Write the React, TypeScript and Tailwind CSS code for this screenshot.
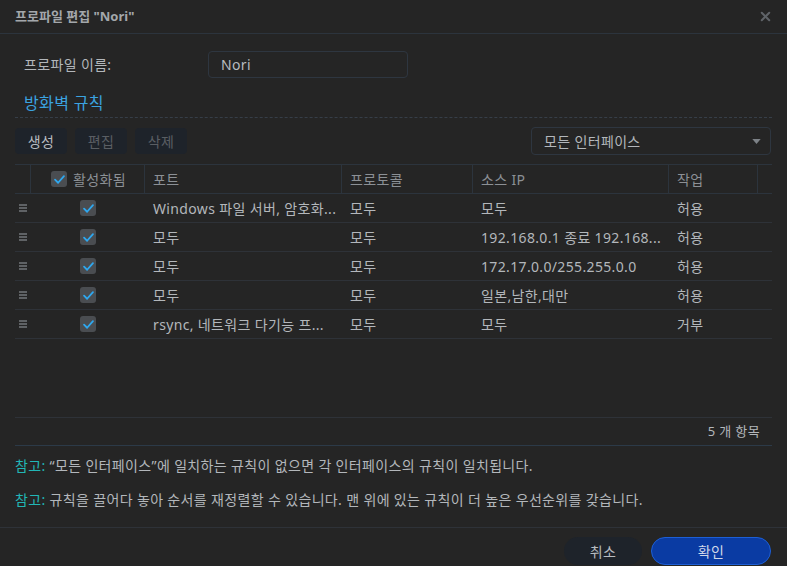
import { X } from "lucide-react";

const font = { fontFamily: '"Noto Sans", "Noto Sans CJK KR", sans-serif' };

const rows = [
  { port: "Windows 파일 서버, 암호화...", proto: "모두", src: "모두", act: "허용" },
  { port: "모두", proto: "모두", src: "192.168.0.1 종료 192.168...", act: "허용" },
  { port: "모두", proto: "모두", src: "172.17.0.0/255.255.0.0", act: "허용" },
  { port: "모두", proto: "모두", src: "일본,남한,대만", act: "허용" },
  { port: "rsync, 네트워크 다기능 프...", proto: "모두", src: "모두", act: "거부" },
];

function Check() {
  return (
    <span className="flex h-4 w-4 items-center justify-center rounded-[3px] bg-[#4a4d51]">
      <svg viewBox="0 0 16 16" className="h-[13px] w-[13px]">
        <path d="M2.5 8.2 L6.3 12 L13.5 3.8" fill="none" stroke="#2ea8f0" strokeWidth="2.2" strokeLinecap="round" strokeLinejoin="round" />
      </svg>
    </span>
  );
}

function Handle() {
  return (
    <svg viewBox="0 0 8 8" className="h-[8px] w-[8px]">
      <path d="M0 1h8M0 4h8M0 7h8" stroke="#9aa0a6" strokeWidth="1" />
    </svg>
  );
}

export default function App() {
  return (
    <div className="flex h-[566px] w-[787px] flex-col bg-[#252525] text-[14px] tracking-[0.35px] text-[#b3b7bb]" style={font}>
      <div className="flex h-[34px] shrink-0 items-center justify-between border-b border-[#2c343d] pl-[15px] pr-[14px]">
        <span className="text-[13px] font-bold tracking-normal text-[#a3a7ab]">프로파일 편집 "Nori"</span>
        <X className="h-[15px] w-[15px] text-[#5f6368]" strokeWidth={3.2} />
      </div>

      <div className="flex flex-1 flex-col px-[15px]">
        <div className="mt-[17px] flex h-[27px] items-center">
          <span className="w-[193px] pl-[9px]">프로파일 이름:</span>
          <div className="flex h-[27px] w-[200px] items-center rounded-[4px] border border-[#2e3640] px-[12px] text-[#b8bcc0]">Nori</div>
        </div>

        <div className="mt-[15px] pl-[9px] text-[16px] leading-[20px] text-[#3ba3e0]">방화벽 규칙</div>
        <div className="mt-[4px] border-b border-dashed border-[#363e48]" />

        <div className="mt-[9px] flex items-center justify-between">
          <div className="flex gap-[8px]">
            <button className="h-[26px] w-[52px] rounded-[4px] bg-[#1e232a] text-[#b8bcc0]">생성</button>
            <button className="h-[26px] w-[52px] rounded-[4px] bg-[#1e232a] text-[#5a5e63]">편집</button>
            <button className="h-[26px] w-[52px] rounded-[4px] bg-[#1e232a] text-[#5a5e63]">삭제</button>
          </div>
          <div className="mr-[1px] flex h-[28px] w-[240px] items-center justify-between rounded-[4px] border border-[#2e3640] pl-[12px] pr-[9px]">
            <span>모든 인터페이스</span>
            <svg viewBox="0 0 10 6" className="h-[5px] w-[9px]">
              <path d="M0 0h10L5 6z" fill="#7d8287" />
            </svg>
          </div>
        </div>

        <div className="mt-[9px] flex flex-1 flex-col">
          <div className="flex h-[30px] border-y border-[#2c343d] text-[#8c9095]">
            <div className="w-[16px] border-r border-[#2c343d]" />
            <div className="flex w-[114px] items-center gap-[6px] border-r border-[#2c343d] pl-[20px]">
              <Check />
              <span>활성화됨</span>
            </div>
            <div className="flex w-[197px] items-center border-r border-[#2c343d] pl-[8px]">포트</div>
            <div className="flex w-[131px] items-center border-r border-[#2c343d] pl-[8px]">프로토콜</div>
            <div className="flex w-[196px] items-center border-r border-[#2c343d] pl-[8px]">소스 IP</div>
            <div className="flex w-[89px] items-center border-r border-[#2c343d] pl-[8px]">작업</div>
          </div>
          {rows.map((r, i) => (
            <div key={i} className="flex h-[29px] items-center border-b border-[#2e3238]">
              <div className="flex w-[16px] justify-center">
                <Handle />
              </div>
              <div className="flex w-[114px] justify-center">
                <Check />
              </div>
              <div className="w-[197px] truncate pl-[8px]">{r.port}</div>
              <div className="w-[131px] pl-[8px]">{r.proto}</div>
              <div className="w-[196px] truncate pl-[8px]">{r.src}</div>
              <div className="w-[89px] pl-[8px]">{r.act}</div>
            </div>
          ))}
          <div className="flex-1" />
          <div className="flex h-[29px] items-center justify-end border-y border-t-[#2e3238] border-b-[#2c3a48] pr-[12px] text-[13px]">5 개 항목</div>
        </div>

        <div className="mt-[10px] leading-[20px]">
          <span className="text-[#22b6b6]">참고: </span>“모든 인터페이스”에 일치하는 규칙이 없으면 각 인터페이스의 규칙이 일치됩니다.
        </div>
        <div className="mt-[14px] leading-[20px]">
          <span className="text-[#22b6b6]">참고: </span>규칙을 끌어다 놓아 순서를 재정렬할 수 있습니다. 맨 위에 있는 규칙이 더 높은 우선순위를 갖습니다.
        </div>
        <div className="h-[17px]" />
      </div>

      <div className="flex h-[39px] shrink-0 items-start justify-end gap-[9px] border-t border-[#2e3238] pr-[16px] pt-[9px]">
        <button className="h-[28px] w-[78px] rounded-full bg-[#1e232a] text-[#b8bcc0]">취소</button>
        <button className="h-[28px] w-[120px] rounded-full border border-[#1d5fd6] bg-[#0a3ba3] text-[#d0d8e8]">확인</button>
      </div>
    </div>
  );
}
